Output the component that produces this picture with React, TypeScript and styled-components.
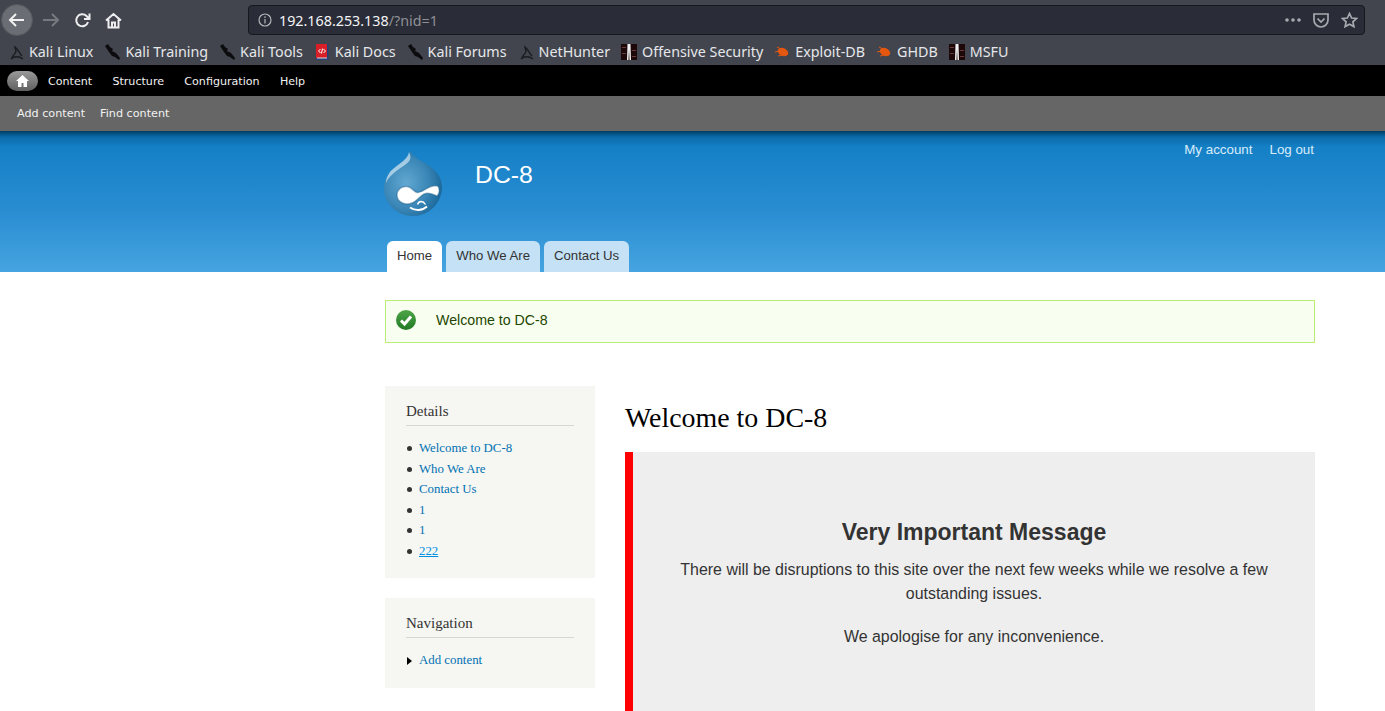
import React from 'react';
import styled, { createGlobalStyle } from 'styled-components';

const GlobalStyle = createGlobalStyle`
    html, body {
        margin: 0;
        padding: 0;
        height: 711px;
        overflow: hidden;
        background: #fff;
    }
    a {
        text-decoration: none;
    }
`;

const Shell = styled.div`
    height: 711px;
    overflow: hidden;
`;

const Browser = styled.div`
    height: 65px;
    background: #42454e;
    font-family: "Noto Sans", sans-serif;
`;

const NavRow = styled.div`
    height: 36px;
    box-sizing: border-box;
    padding: 4px 0 0 1px;
    display: flex;
    align-items: center;
`;

const BackButton = styled.div`
    width: 32px;
    height: 32px;
    border-radius: 50%;
    background: #6b6d74;
    border: 1px solid #55575e;
    box-sizing: border-box;
    display: flex;
    align-items: center;
    justify-content: center;
`;

const NavIcon = styled.div<{ $w: number }>`
    width: ${p => p.$w}px;
    height: 24px;
    display: flex;
    align-items: center;
    justify-content: center;
`;

const UrlBar = styled.div`
    width: 1117px;
    height: 30px;
    margin-left: 118px;
    box-sizing: border-box;
    background: #2a2c37;
    border: 1px solid #17181e;
    border-radius: 4px;
    display: flex;
    align-items: center;
    padding: 0 6px 0 9px;
    font-size: 14.3px;
`;

const UrlHost = styled.span`
    color: #f4f4f6;
    margin-left: 7px;
`;

const UrlPath = styled.span`
    color: #8f9096;
`;

const UrlActions = styled.div`
    margin-left: auto;
    display: flex;
    align-items: center;
    gap: 12px;
`;

const Bookmarks = styled.div`
    height: 29px;
    display: flex;
    align-items: center;
    padding: 2px 0 0 8px;
    box-sizing: border-box;
`;

const Bookmark = styled.div`
    display: flex;
    align-items: center;
    gap: 5px;
    margin-right: 11px;
    color: #e6e7ea;
    font-size: 14.3px;
    white-space: nowrap;
`;

const AdminBar = styled.div`
    height: 31px;
    box-sizing: border-box;
    padding: 1px 0 0 7px;
    background: #000;
    display: flex;
    align-items: center;
    font-family: "DejaVu Sans", sans-serif;
    font-size: 11.1px;
`;

const HomePill = styled.div`
    width: 31px;
    height: 20px;
    margin-top: -1px;
    border-radius: 10px;
    background: linear-gradient(#9a9a9a, #5f5f5f);
    display: flex;
    align-items: center;
    justify-content: center;
    margin-right: 10px;
`;

const AdminLink = styled.a`
    color: #f2f2f2;
    margin-right: 20.3px;
`;

const ShortcutBar = styled.div`
    height: 35px;
    background: #666;
    display: flex;
    align-items: center;
    padding-left: 17px;
    gap: 15px;
    font-family: "DejaVu Sans", sans-serif;
    font-size: 11.2px;
`;

const ShortcutLink = styled.a`
    color: #f2f2f2;
`;

const Header = styled.header`
    height: 141px;
    background: linear-gradient(#003d63 0px, #0b6ba8 6px, #1580c6 16px, #2a8dd2 80px, #45a4e0 141px);
    font-family: "Liberation Sans", sans-serif;
`;

const Wrap = styled.div`
    width: 930px;
    margin: 0 70px 0 auto;
`;

const SecondaryMenu = styled.div`
    height: 0;
    display: flex;
    justify-content: flex-end;
    gap: 17px;
    font-size: 13.35px;
    color: #d7ecfa;
    padding: 11px 1px 0 0;
`;

const Branding = styled.div`
    height: 99px;
    box-sizing: border-box;
    padding-top: 7px;
    margin-left: -1px;
    display: flex;
`;

const SiteName = styled.div`
    color: #fff;
    font-size: 24.8px;
    margin-left: 33px;
    margin-top: 12px;
`;

const Tabs = styled.nav`
    display: flex;
    gap: 4px;
    padding-left: 2px;
`;

const Tab = styled.a<{ $active?: boolean }>`
    height: 31px;
    box-sizing: border-box;
    padding: 7px 10px 0;
    border-radius: 6px 6px 0 0;
    background: ${p => (p.$active ? '#fff' : '#c4e1f5')};
    color: #333;
    font-size: 13.2px;
`;

const Page = styled.main`
    width: 930px;
    margin: 0 70px 0 auto;
    padding-top: 28px;
    font-family: "Liberation Serif", serif;
`;

const Message = styled.div`
    height: 43px;
    box-sizing: border-box;
    background: #f8fff0;
    border: 1px solid #bbee77;
    display: flex;
    align-items: center;
    padding: 0 0 3px 10px;
    gap: 20px;
    font-family: "Liberation Sans", sans-serif;
    font-size: 14.2px;
    color: #234600;
`;

const Columns = styled.div`
    display: flex;
    gap: 30px;
    margin-top: 43px;
`;

const Sidebar = styled.aside`
    width: 210px;
    flex: none;
    display: flex;
    flex-direction: column;
    gap: 20px;
`;

const Block = styled.section<{ $bottom: number }>`
    background: #f6f6f2;
    padding: 16px 21px ${p => p.$bottom}px;
`;

const BlockTitle = styled.h2`
    margin: 0 0 12px;
    padding-bottom: 4px;
    border-bottom: 1px solid #d6d6d2;
    font-size: 15px;
    line-height: 19px;
    font-weight: normal;
    color: #333;
`;

const LinkList = styled.ul`
    margin: 0;
    padding: 0 0 0 13px;
    list-style: none;
    font-size: 12.85px;
    line-height: 20.6px;
`;

const LinkItem = styled.li<{ $leaf?: boolean }>`
    position: relative;
    &::before {
        content: '';
        position: absolute;
        left: -12px;
        top: ${p => (p.$leaf ? '7px' : '8px')};
        ${p =>
            p.$leaf
                ? 'border-left: 5px solid #000; border-top: 4px solid transparent; border-bottom: 4px solid transparent;'
                : 'width: 5px; height: 5px; border-radius: 50%; background: #333;'}
    }
`;

const SideLink = styled.a<{ $hover?: boolean }>`
    color: ${p => (p.$hover ? '#018fe2' : '#0071b3')};
    text-decoration: ${p => (p.$hover ? 'underline' : 'none')};
`;

const Content = styled.div`
    flex: 1;
`;

const Title = styled.h1`
    margin: 0;
    padding-top: 14px;
    font-size: 27.9px;
    line-height: 36px;
    font-weight: normal;
    color: #000;
`;

const Notice = styled.div`
    margin-top: 16px;
    height: 300px;
    box-sizing: border-box;
    background: #eee;
    border-left: 8px solid #f00;
    padding: 66px 40px 0;
    text-align: center;
    font-family: "Liberation Sans", sans-serif;
    color: #333;
`;

const NoticeTitle = styled.h3`
    margin: 0 0 12px;
    font-size: 23px;
    line-height: 28px;
    font-weight: bold;
`;

const NoticeText = styled.p`
    margin: 0 0 19px;
    font-size: 15.95px;
    line-height: 24px;
`;

const Kali = () => (
    <svg width="16" height="16" viewBox="0 0 16 16">
        <path d="M1 2 L4 0 L6 3 L9 5 L8 7 L12 9 L16 14 L15 16 L11 13 L8 12 L5 8 L3 5 Z" fill="#0c0c0e" />
    </svg>
);

const KaliOutline = () => (
    <svg width="16" height="16" viewBox="0 0 16 16" fill="none" stroke="#1b1c20" strokeWidth="1.4">
        <path d="M4 14 C5 10 8 10 8 7 L7 3 C10 5 11 9 14 12 M3 15 C6 12 11 12 15 15" />
    </svg>
);

const Docs = () => (
    <svg width="16" height="16" viewBox="0 0 16 16">
        <rect x="2" y="0" width="12" height="16" rx="1" fill="#d81f28" />
        <rect x="13" y="0" width="1.5" height="16" fill="#27407a" />
        <rect x="2" y="14" width="12" height="2" fill="#27407a" />
        <rect x="3" y="13.5" width="10" height="1" fill="#d8d8de" />
        <path d="M6.5 5 L4.5 7 L6.5 9 M9.5 5 L11.5 7 L9.5 9 M8.6 4.5 L7.4 9.5" stroke="#fff" strokeWidth="1" fill="none" />
    </svg>
);

const Offsec = () => (
    <svg width="16" height="16" viewBox="0 0 16 16">
        <rect width="16" height="16" fill="#1c0808" />
        <rect x="1" y="3" width="4" height="1" fill="#6b3a3a" />
        <rect x="11" y="6" width="4" height="1" fill="#6b3a3a" />
        <rect x="1" y="9" width="4" height="1" fill="#6b3a3a" />
        <rect x="11" y="12" width="4" height="1" fill="#6b3a3a" />
        <path d="M6.5 0 H9.5 L10 16 H8.5 L8 5 L7.5 16 H6 Z" fill="#f2f2f2" />
    </svg>
);

const Bug = () => (
    <svg width="16" height="13" viewBox="0 0 16 13">
        <ellipse cx="9" cy="7" rx="5.5" ry="3.8" transform="rotate(25 9 7)" fill="#e4570f" />
        <path d="M1 7 L6 6 M3 2 L7 4 M4 11 L8 10" stroke="#e4570f" strokeWidth="1" />
    </svg>
);

const DrupalLogo = () => (
    <svg width="58" height="68" viewBox="0 0 58 68">
        <defs>
            <radialGradient id="drop" cx="0.38" cy="0.5" r="0.65">
                <stop offset="0" stopColor="#62a8d2" />
                <stop offset="0.6" stopColor="#3a86b6" />
                <stop offset="1" stopColor="#186598" />
            </radialGradient>
        </defs>
        <path d="M26 1 C26 8 19 12 13 17 C5 23 0 30 0 39 C0 55 13 67 29 67 C45 67 58 54 58 38 C58 26 49 19 41 14 C34 10 28 7 26 1 Z" fill="url(#drop)" />
        <path d="M25 3 C24 10 16 14 9 20 C4 24 2 30 2 34 C5 27 12 22 18 18 C24 14 29 11 25 3 Z" fill="#c4e0f0" opacity="0.75" />
        <path d="M13 46 C13 40 18 37 23 37.5 C28 38 30 43 33 43.5 C38 44 43 38 49 37 C52 36.5 54 37 54.5 38 C56 42 55 45 53 47 C49 45 44 43 40 45 C36 47 33 52 28 54 C21 57 13 53 13 46 Z" fill="#fff" stroke="#1c5f8c" strokeOpacity="0.45" strokeWidth="1.5" />
        <path d="M26 58.5 C31 62 38 62 43 57.5" stroke="#fff" strokeWidth="1.8" fill="none" />
        <path d="M33.5 55.5 C35 51.5 39 51.5 41.5 55.5" stroke="#fff" strokeWidth="1.4" fill="none" />
    </svg>
);

const App = (): JSX.Element => {
    return (
        <Shell>
            <GlobalStyle />
            <Browser>
                <NavRow>
                    <BackButton>
                        <svg width="18" height="18" viewBox="0 0 18 18" fill="none" stroke="#f2f2f2" strokeWidth="2">
                            <path d="M16 9 H2 M8 3 L2 9 L8 15" />
                        </svg>
                    </BackButton>
                    <NavIcon $w={35}>
                        <svg width="18" height="18" viewBox="0 0 18 18" fill="none" stroke="#77797f" strokeWidth="2">
                            <path d="M1 9 H15 M10 3 L16 9 L10 15" />
                        </svg>
                    </NavIcon>
                    <NavIcon $w={28}>
                        <svg width="17" height="17" viewBox="0 0 17 17" fill="none" stroke="#eeeef0" strokeWidth="2">
                            <path d="M14 10 A6 6 0 1 1 12.5 4 L15 6.5 M15.5 1.5 V7 H10" />
                        </svg>
                    </NavIcon>
                    <NavIcon $w={34}>
                        <svg width="17" height="17" viewBox="0 0 17 17" fill="none" stroke="#eeeef0" strokeWidth="2">
                            <path d="M1 8.5 L8.5 2 L16 8.5 M3.5 7.5 V15.5 H13.5 V7.5 M7 15 V10.5 H10 V15" />
                        </svg>
                    </NavIcon>
                    <UrlBar>
                        <svg width="14" height="14" viewBox="0 0 14 14" fill="none" stroke="#b5b6ba" strokeWidth="1.2">
                            <circle cx="7" cy="7" r="6" />
                            <path d="M7 6 V10.5 M7 3.3 V5" />
                        </svg>
                        <UrlHost>192.168.253.138</UrlHost>
                        <UrlPath>/?nid=1</UrlPath>
                        <UrlActions>
                            <svg width="16" height="4" viewBox="0 0 16 4" fill="#a9aab0">
                                <circle cx="2" cy="2" r="1.8" />
                                <circle cx="8" cy="2" r="1.8" />
                                <circle cx="14" cy="2" r="1.8" />
                            </svg>
                            <svg width="16" height="15" viewBox="0 0 16 15" fill="none" stroke="#a9aab0" strokeWidth="1.7">
                                <path d="M1 1 H15 V7 A7 7 0 0 1 1 7 Z M4.5 5.5 L8 9 L11.5 5.5" />
                            </svg>
                            <svg width="17" height="16" viewBox="0 0 17 16" fill="none" stroke="#a9aab0" strokeWidth="1.7">
                                <path d="M8.5 1.5 L10.6 6 L15.5 6.5 L11.9 9.8 L12.9 14.6 L8.5 12.2 L4.1 14.6 L5.1 9.8 L1.5 6.5 L6.4 6 Z" />
                            </svg>
                        </UrlActions>
                    </UrlBar>
                </NavRow>
                <Bookmarks>
                    <Bookmark><KaliOutline />Kali Linux</Bookmark>
                    <Bookmark><Kali />Kali Training</Bookmark>
                    <Bookmark><Kali />Kali Tools</Bookmark>
                    <Bookmark><Docs />Kali Docs</Bookmark>
                    <Bookmark><Kali />Kali Forums</Bookmark>
                    <Bookmark><KaliOutline />NetHunter</Bookmark>
                    <Bookmark><Offsec />Offensive Security</Bookmark>
                    <Bookmark><Bug />Exploit-DB</Bookmark>
                    <Bookmark><Bug />GHDB</Bookmark>
                    <Bookmark><Offsec />MSFU</Bookmark>
                </Bookmarks>
            </Browser>
            <AdminBar>
                <HomePill>
                    <svg width="13" height="12" viewBox="0 0 13 12" fill="#fff">
                        <path d="M6.5 0 L13 6 H11 V12 H7.5 V8 H5.5 V12 H2 V6 H0 Z" />
                    </svg>
                </HomePill>
                <AdminLink>Content</AdminLink>
                <AdminLink>Structure</AdminLink>
                <AdminLink>Configuration</AdminLink>
                <AdminLink>Help</AdminLink>
            </AdminBar>
            <ShortcutBar>
                <ShortcutLink>Add content</ShortcutLink>
                <ShortcutLink>Find content</ShortcutLink>
            </ShortcutBar>
            <Header>
                <Wrap>
                    <SecondaryMenu>
                        <span>My account</span>
                        <span>Log out</span>
                    </SecondaryMenu>
                    <Branding>
                        <DrupalLogo />
                        <SiteName>DC-8</SiteName>
                    </Branding>
                    <Tabs>
                        <Tab $active>Home</Tab>
                        <Tab>Who We Are</Tab>
                        <Tab>Contact Us</Tab>
                    </Tabs>
                </Wrap>
            </Header>
            <Page>
                <Message>
                    <svg width="20" height="20" viewBox="0 0 20 20">
                        <defs>
                            <linearGradient id="ok" x1="0" y1="0" x2="0" y2="1">
                                <stop offset="0" stopColor="#4fa548" />
                                <stop offset="1" stopColor="#1f7a24" />
                            </linearGradient>
                        </defs>
                        <circle cx="10" cy="10" r="10" fill="url(#ok)" />
                        <path d="M5 10.5 L8.5 14 L15 6.5" stroke="#fff" strokeWidth="3" fill="none" />
                    </svg>
                    Welcome to DC-8
                </Message>
                <Columns>
                    <Sidebar>
                        <Block $bottom={16}>
                            <BlockTitle>Details</BlockTitle>
                            <LinkList>
                                <LinkItem><SideLink>Welcome to DC-8</SideLink></LinkItem>
                                <LinkItem><SideLink>Who We Are</SideLink></LinkItem>
                                <LinkItem><SideLink>Contact Us</SideLink></LinkItem>
                                <LinkItem><SideLink>1</SideLink></LinkItem>
                                <LinkItem><SideLink>1</SideLink></LinkItem>
                                <LinkItem><SideLink $hover>222</SideLink></LinkItem>
                            </LinkList>
                        </Block>
                        <Block $bottom={18}>
                            <BlockTitle>Navigation</BlockTitle>
                            <LinkList>
                                <LinkItem $leaf><SideLink>Add content</SideLink></LinkItem>
                            </LinkList>
                        </Block>
                    </Sidebar>
                    <Content>
                        <Title>Welcome to DC-8</Title>
                        <Notice>
                            <NoticeTitle>Very Important Message</NoticeTitle>
                            <NoticeText>There will be disruptions to this site over the next few weeks while we resolve a few outstanding issues.</NoticeText>
                            <NoticeText>We apologise for any inconvenience.</NoticeText>
                        </Notice>
                    </Content>
                </Columns>
            </Page>
        </Shell>
    );
};

export default App;
